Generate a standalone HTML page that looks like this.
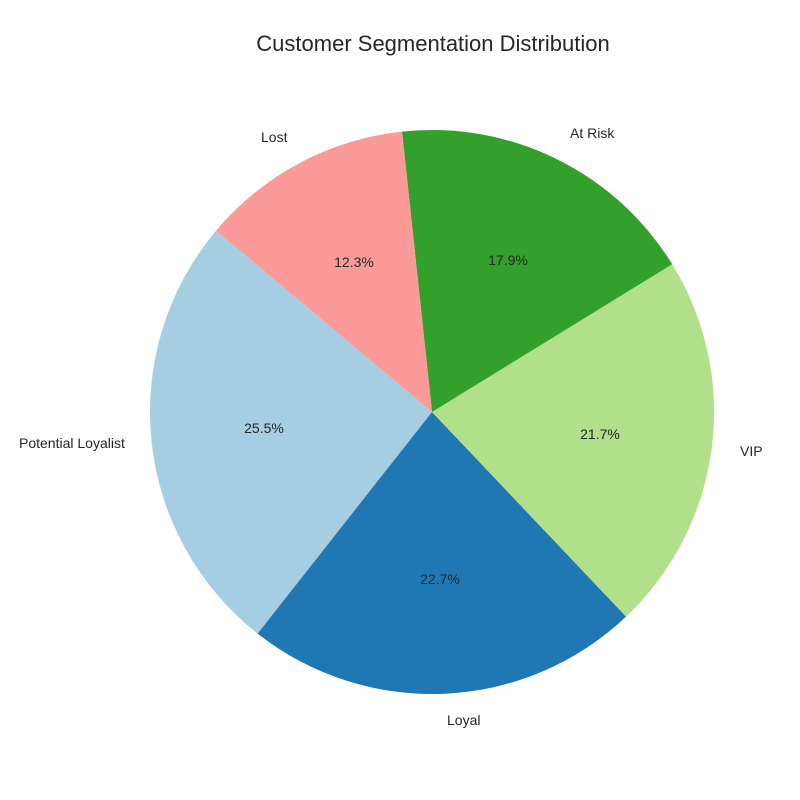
<!DOCTYPE html>
<html><head><meta charset="utf-8"><style>
html,body{margin:0;padding:0;background:#fff;}
svg{display:block;font-family:"Liberation Sans",Arial,sans-serif;}
</style></head><body>
<svg width="800" height="800" viewBox="0 0 800 800" xmlns="http://www.w3.org/2000/svg">
<rect width="800" height="800" fill="#fff"/>
<text x="433" y="51" font-size="22" text-anchor="middle" fill="#262626">Customer Segmentation Distribution</text>
<g transform="translate(432,412)">
<path d="M0 0 L-216 -181.3 A282 282 0 0 0 -174.4 221.6 Z" fill="#a6cee3"/>
<path d="M0 0 L-174.4 221.6 A282 282 0 0 0 194.1 204.6 Z" fill="#1f78b4"/>
<path d="M0 0 L194.1 204.6 A282 282 0 0 0 240.2 -147.8 Z" fill="#b2df8a"/>
<path d="M0 0 L240.2 -147.8 A282 282 0 0 0 -30 -280.4 Z" fill="#33a02c"/>
<path d="M0 0 L-30 -280.4 A282 282 0 0 0 -216 -181.3 Z" fill="#fb9a99"/>
</g>
<g font-size="14" fill="#262626" text-anchor="middle">
<text x="264" y="433">25.5%</text>
<text x="440" y="584">22.7%</text>
<text x="600" y="439">21.7%</text>
<text x="508" y="265">17.9%</text>
<text x="354" y="267">12.3%</text>
</g>
<g font-size="14" fill="#262626">
<text x="19" y="448">Potential Loyalist</text>
<text x="447" y="725">Loyal</text>
<text x="740" y="456">VIP</text>
<text x="570" y="138">At Risk</text>
<text x="261" y="142">Lost</text>
</g>
</svg>
</body></html>
